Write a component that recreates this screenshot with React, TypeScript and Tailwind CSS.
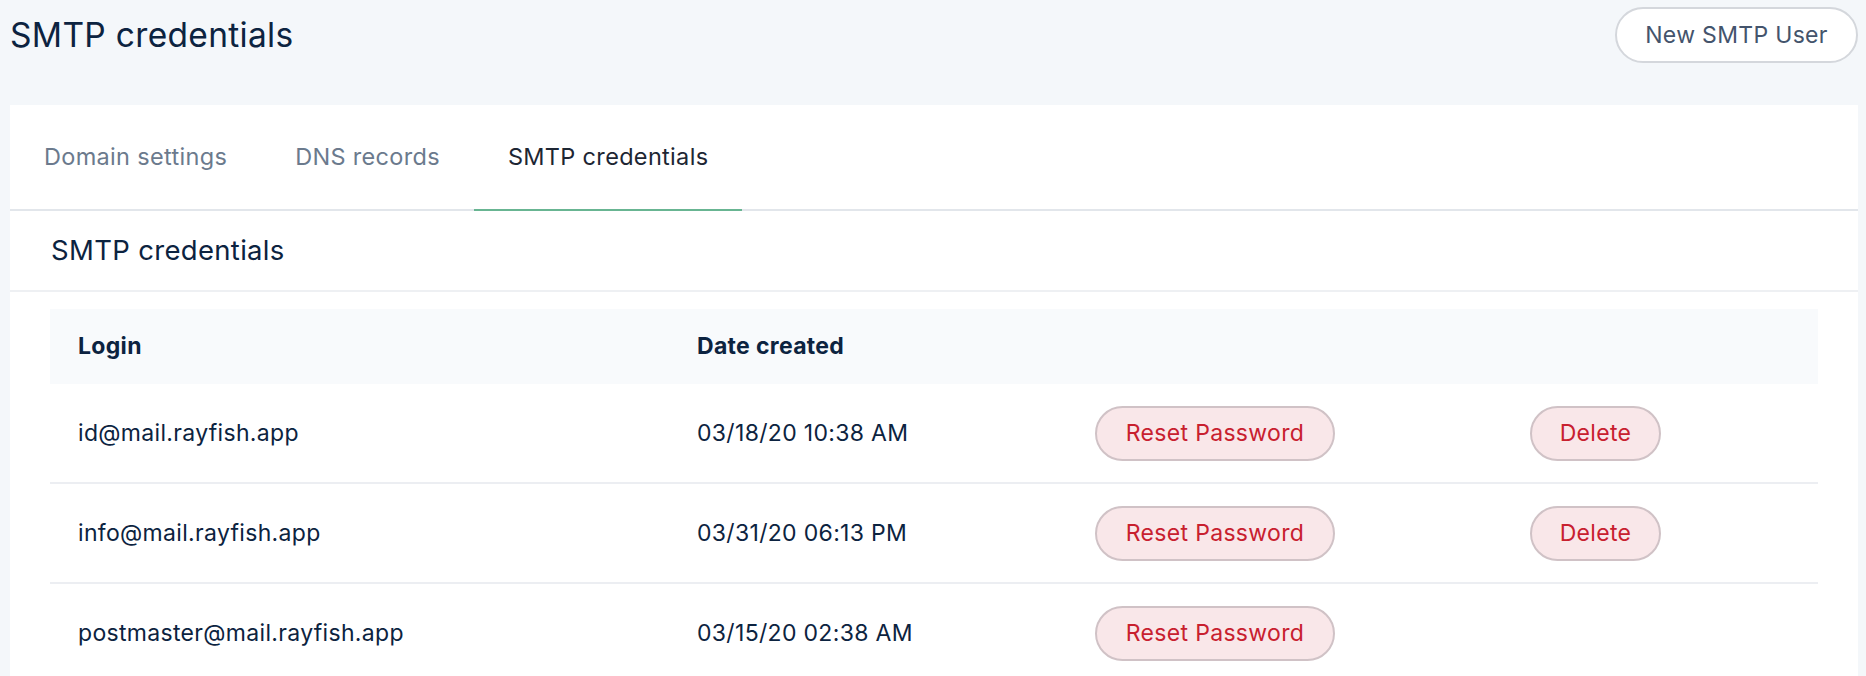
const rows = [
  { login: "id@mail.rayfish.app", created: "03/18/20 10:38 AM", canDelete: true },
  { login: "info@mail.rayfish.app", created: "03/31/20 06:13 PM", canDelete: true },
  { login: "postmaster@mail.rayfish.app", created: "03/15/20 02:38 AM", canDelete: false },
];

const tabs = ["Domain settings", "DNS records", "SMTP credentials"];

const cols = "grid grid-cols-[619px_398px_435px_1fr]";

export default function App() {
  return (
    <div className="h-[676px] overflow-hidden bg-[#f4f7fa] pl-[10px] pr-[8px] font-['Inter',sans-serif] tracking-[0.02em] text-[#0c2340]">
      <div className="mt-[7px] mb-[42px] flex h-[56px] items-center justify-between">
        <h1 className="text-[33.5px] font-normal">SMTP credentials</h1>
        <button className="h-[56px] w-[243px] rounded-full border-2 border-[#d4d7dc] bg-white text-[23px] text-[#44546c]">
          New SMTP User
        </button>
      </div>

      <div className="bg-white">
        <div className="flex h-[106px] items-stretch border-b-2 border-[#e2e6eb]">
          {tabs.map((tab, i) => {
            const active = i === 2;
            return (
              <div
                key={tab}
                className={`-mb-[2px] flex items-center px-[34px] text-[23.5px] ${
                  active
                    ? "border-b-2 border-[#68b592] text-[#1d2633]"
                    : "border-b-2 border-transparent text-[#6b7a8d]"
                }`}
              >
                {tab}
              </div>
            );
          })}
        </div>

        <div className="flex h-[81px] items-center border-b-2 border-[#eef0f3] pl-[41px] text-[27.5px]">
          SMTP credentials
        </div>

        <div className="px-[40px] pt-[17px]">
          <div className={`${cols} h-[75px] items-center bg-[#f8fafc] text-[23px] font-bold`}>
            <div className="pl-[28px]">Login</div>
            <div className="pl-[28px]">Date created</div>
            <div />
            <div />
          </div>
          {rows.map((row) => (
            <div
              key={row.login}
              className={`${cols} h-[100px] items-center border-b-2 border-[#eceef2] text-[23px]`}
            >
              <div className="pl-[28px]">{row.login}</div>
              <div className="pl-[28px]">{row.created}</div>
              <div className="pl-[28px]">
                <button className="h-[55px] w-[240px] rounded-full border-2 border-[#d0c2c6] bg-[#f9e7e9] text-[23px] text-[#c8202f]">
                  Reset Password
                </button>
              </div>
              <div className="pl-[28px]">
                {row.canDelete && (
                  <button className="h-[55px] w-[131px] rounded-full border-2 border-[#d0c2c6] bg-[#f9e7e9] text-[23px] text-[#c8202f]">
                    Delete
                  </button>
                )}
              </div>
            </div>
          ))}
        </div>
      </div>
    </div>
  );
}
